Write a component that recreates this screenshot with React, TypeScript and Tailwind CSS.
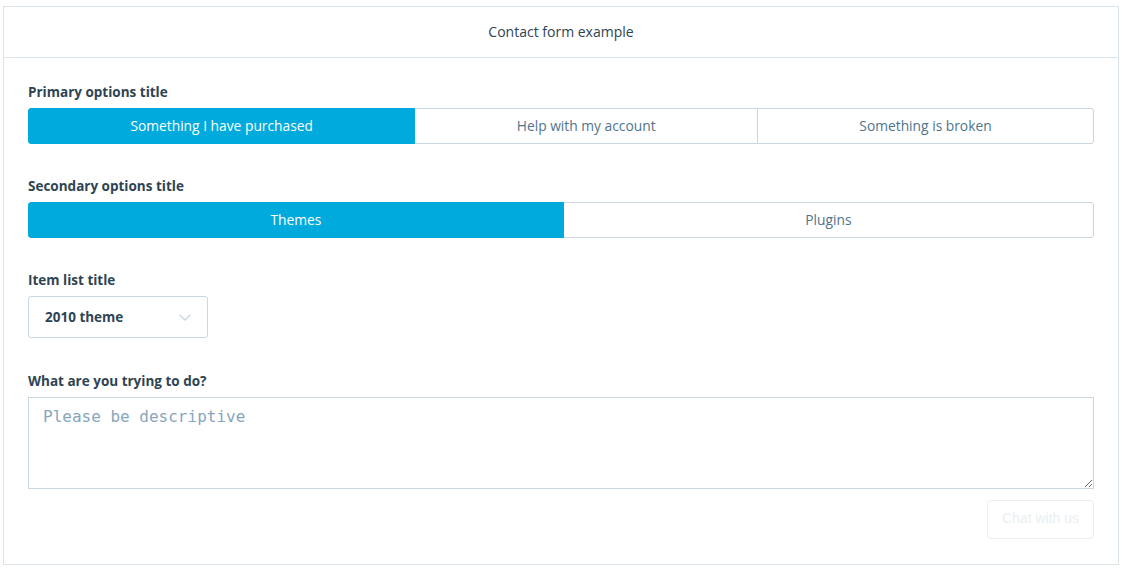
import { useState } from "react"

const font = { fontFamily: '"Open Sans", "Noto Sans", sans-serif' }

function Segmented({ options, selected }: { options: string[]; selected: number }) {
    const [active, setActive] = useState(selected)
    return (
        <div className="flex w-full">
            {options.map((opt, i) => (
                <button
                    key={opt}
                    onClick={() => setActive(i)}
                    className={
                        "flex-auto h-9 leading-[18px] pb-[0.5px] text-[13.8px] border -ml-px first:ml-0 first:rounded-l-[3px] last:rounded-r-[3px] " +
                        (i === active
                            ? "bg-[#00aadc] border-[#00aadc] text-white relative z-10"
                            : "bg-white border-[#c8d7e1] text-[#4f748e]")
                    }
                >
                    {opt}
                </button>
            ))}
        </div>
    )
}

function Label({ children }: { children: string }) {
    return <div className="text-[13.5px] font-bold text-[#2e4453] leading-[18px] pt-px mb-[7px]">{children}</div>
}

export default function App() {
    return (
        <div className="bg-white min-h-[572px] pt-[6px] pl-[3px]" style={font}>
            <div className="w-[1116px] border border-[#dbe4ea] bg-white">
                <div className="h-[51px] pb-[2px] border-b border-[#dbe4ea] flex items-center justify-center text-[14px] text-[#2e4453]">
                    Contact form example
                </div>
                <div className="px-6 pt-6 pb-[25px]">
                    <Label>Primary options title</Label>
                    <Segmented
                        options={["Something I have purchased", "Help with my account", "Something is broken"]}
                        selected={0}
                    />

                    <div className="mt-8">
                        <Label>Secondary options title</Label>
                        <Segmented options={["Themes", "Plugins"]} selected={0} />
                    </div>

                    <div className="mt-8">
                        <Label>Item list title</Label>
                        <div className="w-[180px] h-[42px] border border-[#c8d7e1] rounded-[3px] flex items-center justify-between pl-4 pr-[14px] text-[13.5px] font-bold text-[#2e4453]">
                            <span>2010 theme</span>
                            <svg width="16" height="16" viewBox="0 0 24 24" fill="none" stroke="#c8d7e1" strokeWidth="2">
                                <path d="M4 8.5l8 8 8-8" />
                            </svg>
                        </div>
                    </div>

                    <div className="mt-[33px]">
                        <Label>What are you trying to do?</Label>
                        <textarea
                            placeholder="Please be descriptive"
                            className="block w-full h-[92px] border border-[#c8d7e1] px-[14px] py-[7px] text-[16px] text-[#2e4453] placeholder:text-[#87a6bc] outline-none"
                            style={{ fontFamily: '"DejaVu Sans Mono", monospace' }}
                        />
                    </div>

                    <div className="flex justify-end mt-[11px]">
                        <button
                            disabled
                            className="h-[39px] px-[14px] pb-[3px] border border-[#e9eff3] rounded-[4px] text-[14px] text-[#e9eff3] bg-white"
                            style={{ fontFamily: '"Liberation Sans", Arial, sans-serif' }}
                        >
                            Chat with us
                        </button>
                    </div>
                </div>
            </div>
        </div>
    )
}
